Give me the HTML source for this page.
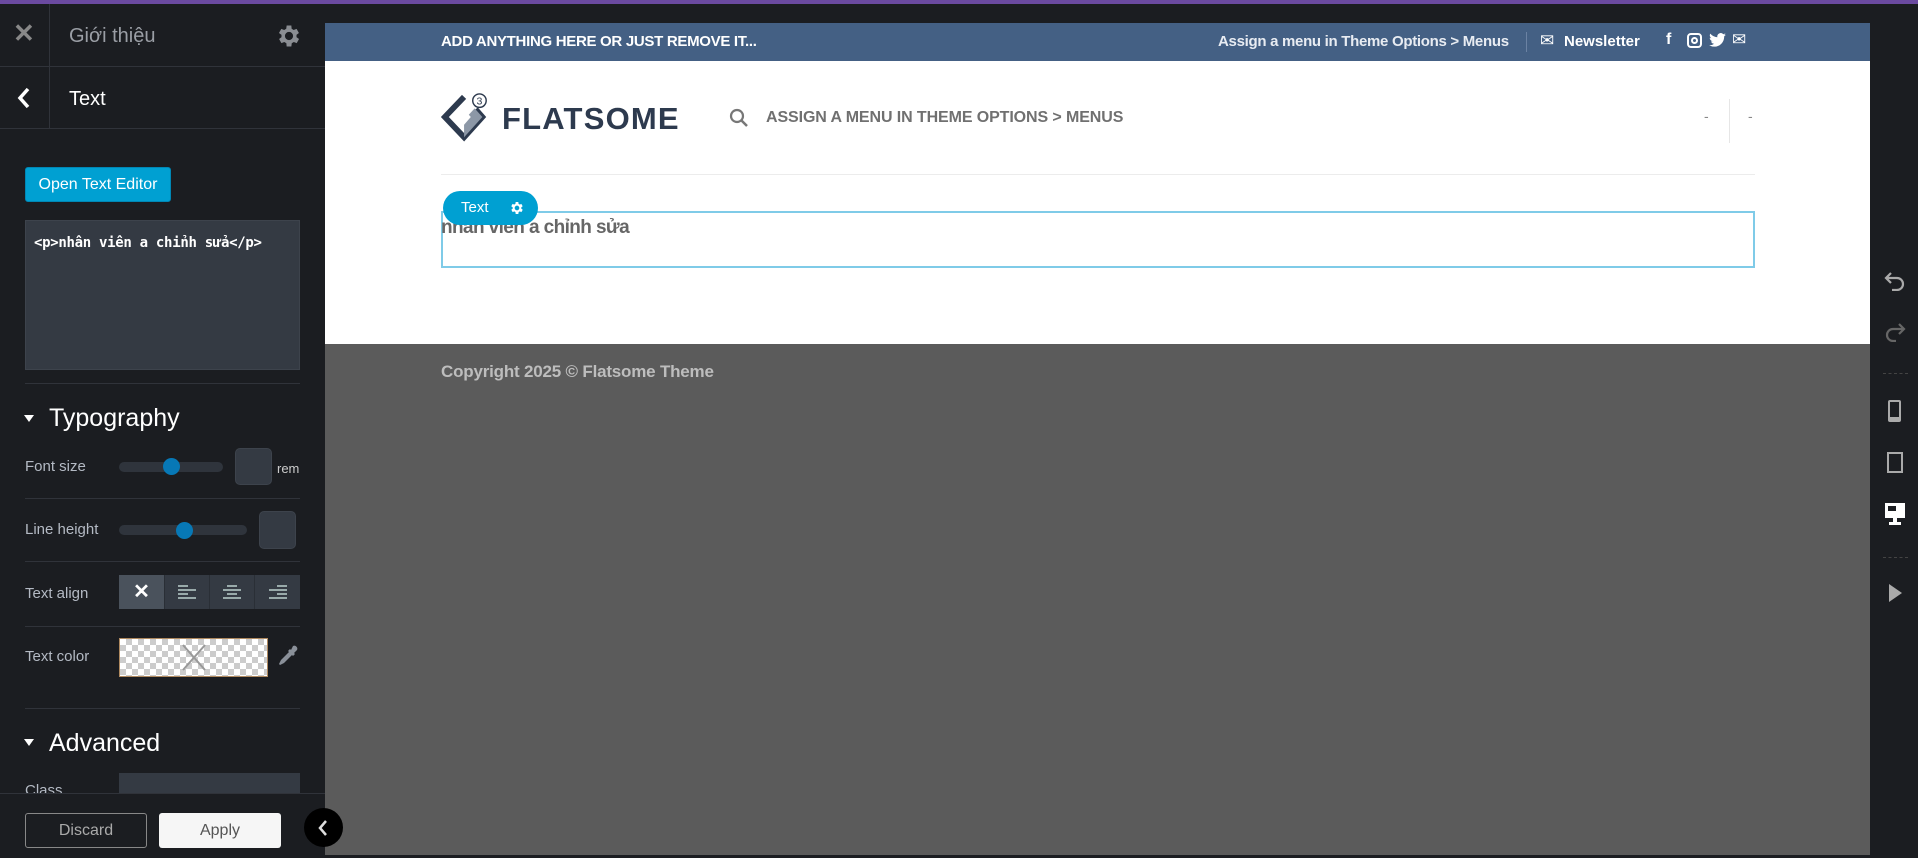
<!DOCTYPE html>
<html><head><meta charset="utf-8"><style>
*{box-sizing:border-box;margin:0;padding:0}
body{width:1918px;height:858px;overflow:hidden;background:#1b1d21;font-family:"Liberation Sans","Noto Sans CJK SC",sans-serif;position:relative}
.a{position:absolute}
.purple{left:0;top:0;width:1918px;height:4px;background:#6b4aa0}
.sb{left:0;top:4px;width:325px;height:854px;background:#1b1d21}
.hl{background:#30333a;height:1px}
.lbl{color:#b4bac4;font-size:15px}
.inp{background:#343a43;border:1px solid #3d434c;border-radius:4px}
.track{height:10px;background:#2f343c;border-radius:5px}
.knob{width:17px;height:17px;border-radius:50%;background:#0778b6}
</style></head><body>
<div class="a purple"></div>
<div class="a sb"></div>
<div class="a" style="left:49px;top:4px;width:1px;height:124px;background:#30333a"></div>
<div class="a hl" style="left:0;top:66px;width:325px"></div>
<div class="a hl" style="left:0;top:128px;width:325px"></div>
<div class="a" style="left:13px;top:20px;color:#888;font-size:26px;line-height:26px;font-weight:bold">✕</div>
<div class="a" style="left:69px;top:25px;color:#9a9ea5;font-size:20px">Giới thiệu</div>
<svg class="a" style="left:275px;top:22px" width="28" height="28" viewBox="0 0 24 24"><path fill="#8a8d92" d="M19.4 13a7.5 7.5 0 000-2l2.1-1.6-2-3.5-2.5 1a7 7 0 00-1.7-1L15 3h-4l-.4 2.9a7 7 0 00-1.7 1l-2.5-1-2 3.5L6.6 11a7.5 7.5 0 000 2l-2.1 1.6 2 3.5 2.5-1a7 7 0 001.7 1L11 21h4l.4-2.9a7 7 0 001.7-1l2.5 1 2-3.5zM13 15.5a3.5 3.5 0 110-7 3.5 3.5 0 010 7z" transform="translate(-1 0)"/></svg>
<svg class="a" style="left:17px;top:86px" width="14" height="24" viewBox="0 0 14 24"><path d="M11 3L3 12l8 9" stroke="#fff" stroke-width="3.5" fill="none"/></svg>
<div class="a" style="left:69px;top:88px;color:#fff;font-size:20px">Text</div>
<div class="a" style="left:25px;top:167px;width:146px;height:35px;background:#00a0d2;border:1px solid #0087b5;border-radius:3px;color:#fff;font-size:16px;line-height:33px;text-align:center">Open Text Editor</div>
<div class="a inp" style="left:25px;top:220px;width:275px;height:150px;border-radius:0;color:#fff;font-family:'DejaVu Sans Mono','Liberation Mono',monospace;font-size:14px;font-weight:bold;padding:14px 8px;letter-spacing:-0.3px">&lt;p&gt;nhân viên a chỉnh sửa&lt;/p&gt;</div>
<div class="a hl" style="left:25px;top:383px;width:275px"></div>
<div class="a" style="left:24px;top:415px;width:0;height:0;border-left:5px solid transparent;border-right:5px solid transparent;border-top:7px solid #fff"></div>
<div class="a" style="left:49px;top:404px;color:#fff;font-size:25px">Typography</div>
<div class="a lbl" style="left:25px;top:458px">Font size</div>
<div class="a track" style="left:119px;top:462px;width:104px"></div>
<div class="a knob" style="left:163px;top:458px"></div>
<div class="a inp" style="left:235px;top:448px;width:37px;height:37px;border-radius:5px"></div>
<div class="a" style="left:277px;top:461px;color:#ccc;font-size:13px">rem</div>
<div class="a hl" style="left:25px;top:498px;width:275px"></div>
<div class="a lbl" style="left:25px;top:521px">Line height</div>
<div class="a track" style="left:119px;top:525px;width:128px"></div>
<div class="a knob" style="left:176px;top:522px"></div>
<div class="a inp" style="left:259px;top:511px;width:37px;height:38px;border-radius:5px"></div>
<div class="a hl" style="left:25px;top:561px;width:275px"></div>
<div class="a lbl" style="left:25px;top:585px">Text align</div>
<div class="a" style="left:119px;top:575px;width:181px;height:34px;background:#343a43;display:flex">
 <div style="width:45px;height:34px;background:#4a525c;color:#fff;font-size:20px;font-weight:bold;text-align:center;line-height:34px">✕</div>
 <div style="width:45px;border-left:1px solid #2a2f36;display:flex;align-items:center;justify-content:center"><svg width="18" height="16"><g fill="#9aa"><rect x="0" y="1" width="10" height="2"/><rect x="0" y="5" width="18" height="2"/><rect x="0" y="9" width="10" height="2"/><rect x="0" y="13" width="18" height="2"/></g></svg></div>
 <div style="width:45px;border-left:1px solid #2a2f36;display:flex;align-items:center;justify-content:center"><svg width="18" height="16"><g fill="#9aa"><rect x="4" y="1" width="10" height="2"/><rect x="0" y="5" width="18" height="2"/><rect x="4" y="9" width="10" height="2"/><rect x="0" y="13" width="18" height="2"/></g></svg></div>
 <div style="width:46px;border-left:1px solid #2a2f36;display:flex;align-items:center;justify-content:center"><svg width="18" height="16"><g fill="#9aa"><rect x="8" y="1" width="10" height="2"/><rect x="0" y="5" width="18" height="2"/><rect x="8" y="9" width="10" height="2"/><rect x="0" y="13" width="18" height="2"/></g></svg></div>
</div>
<div class="a hl" style="left:25px;top:626px;width:275px"></div>
<div class="a lbl" style="left:25px;top:648px">Text color</div>
<div class="a" style="left:119px;top:638px;width:149px;height:39px;border:1px solid #b08a60;background-color:#fff;background-image:linear-gradient(45deg,#ccc 25%,transparent 25%,transparent 75%,#ccc 75%),linear-gradient(45deg,#ccc 25%,transparent 25%,transparent 75%,#ccc 75%);background-size:12px 12px;background-position:0 0,6px 6px"></div>
<svg class="a" style="left:181px;top:643px" width="26" height="29"><path d="M2 2L24 27M24 2L2 27" stroke="#999" stroke-width="2"/></svg>
<svg class="a" style="left:277px;top:645px" width="22" height="24" viewBox="0 0 22 24"><path d="M16 1a3 3 0 014 4l-3 3 1 1-2 2-1-1-8 8-4 2-1-1 2-4 8-8-1-1 2-2 1 1z" fill="#8a9099"/></svg>
<div class="a hl" style="left:25px;top:708px;width:275px"></div>
<div class="a" style="left:24px;top:739px;width:0;height:0;border-left:5px solid transparent;border-right:5px solid transparent;border-top:7px solid #fff"></div>
<div class="a" style="left:49px;top:729px;color:#fff;font-size:25px">Advanced</div>
<div class="a lbl" style="left:25px;top:782px">Class</div>
<div class="a" style="left:119px;top:773px;width:181px;height:30px;background:#343a43"></div>
<div class="a" style="left:0;top:793px;width:325px;height:65px;background:#1b1d21;border-top:1px solid #30333a"></div>
<div class="a" style="left:25px;top:813px;width:122px;height:35px;border:1px solid #888;border-radius:3px;color:#aaa;font-size:16px;line-height:33px;text-align:center">Discard</div>
<div class="a" style="left:159px;top:813px;width:122px;height:35px;background:#f6f6f6;border-radius:3px;color:#555;font-size:16px;line-height:35px;text-align:center">Apply</div>

<!-- preview -->
<div class="a" style="left:325px;top:23px;width:1545px;height:38px;background:#446084"></div>
<div class="a" style="left:441px;top:33px;color:#fff;font-size:15px;font-weight:bold;letter-spacing:-0.3px">ADD ANYTHING HERE OR JUST REMOVE IT...</div>
<div class="a" style="left:1218px;top:33px;color:#e8ecf2;font-size:15px;font-weight:bold;letter-spacing:-0.3px">Assign a menu in Theme Options &gt; Menus</div>
<div class="a" style="left:1526px;top:32px;width:1px;height:20px;background:#6b82a3"></div>
<div class="a" style="left:1540px;top:31px;color:#fff;font-size:17px">✉</div>
<div class="a" style="left:1564px;top:33px;color:#fff;font-size:15px;font-weight:bold">Newsletter</div>
<div class="a" style="left:1666px;top:31px;color:#fff;font-size:16px;font-weight:bold">f</div>
<div class="a" style="left:1687px;top:33px;width:15px;height:15px;border:2px solid #fff;border-radius:4px"></div>
<div class="a" style="left:1691px;top:37px;width:7px;height:7px;border:2px solid #fff;border-radius:50%"></div>
<svg class="a" style="left:1709px;top:33px" width="17" height="14" viewBox="0 0 24 20"><path fill="#fff" d="M24 2.4a10 10 0 01-2.8.8A5 5 0 0023.3.5a10 10 0 01-3.1 1.2A4.9 4.9 0 0011.8 6 14 14 0 011.7.9a4.9 4.9 0 001.5 6.6A5 5 0 01.9 6.9a4.9 4.9 0 004 4.9 5 5 0 01-2.2.1 4.9 4.9 0 004.6 3.4A9.9 9.9 0 010 17.3 14 14 0 007.5 19.5c9 0 14-7.5 14-14v-.6A10 10 0 0024 2.4z"/></svg>
<div class="a" style="left:1732px;top:30px;color:#fff;font-size:17px">✉</div>

<div class="a" style="left:325px;top:61px;width:1545px;height:283px;background:#fff"></div>
<svg class="a" style="left:441px;top:90px" width="50" height="55" viewBox="0 0 52 55"><path d="M24 6L4 27l20 21 19-21-7-8" stroke="#2d3a4e" stroke-width="6" fill="none" stroke-linejoin="miter"/><path d="M24 48l19-21-8-9-11 12z" fill="#8c97a6"/><path d="M17 27l7-8 7 8-7 8z" fill="#fff"/><circle cx="40" cy="10" r="7" fill="#fff" stroke="#2d3a4e" stroke-width="1.5"/><text x="40" y="14" font-size="11" text-anchor="middle" fill="#2d3a4e" font-family="Liberation Sans">3</text></svg>
<div class="a" style="left:502px;top:101px;color:#2d3a4e;font-size:31px;font-weight:bold;letter-spacing:1.2px">FLATSOME</div>
<svg class="a" style="left:729px;top:108px" width="20" height="20"><circle cx="8" cy="8" r="6" stroke="#777" stroke-width="2.2" fill="none"/><path d="M12.5 12.5L18 18" stroke="#777" stroke-width="2.5"/></svg>
<div class="a" style="left:766px;top:109px;color:#707070;font-size:16px;font-weight:bold;letter-spacing:-0.1px">ASSIGN A MENU IN THEME OPTIONS &gt; MENUS</div>
<div class="a" style="left:1704px;top:108px;color:#888;font-size:14px">-</div>
<div class="a" style="left:1729px;top:99px;width:1px;height:44px;background:#e6e6e6"></div>
<div class="a" style="left:1748px;top:108px;color:#888;font-size:14px">-</div>
<div class="a" style="left:441px;top:174px;width:1314px;height:1px;background:#ececec"></div>
<div class="a" style="left:441px;top:211px;width:1314px;height:57px;border:2px solid #7fcbe8"></div>
<div class="a" style="left:441px;top:217px;color:#666;font-size:19px;font-weight:bold;letter-spacing:-0.6px">nhân viên a chỉnh sửa</div>
<div class="a" style="left:443px;top:191px;width:95px;height:34px;border-radius:17px;background:#00a0d2"></div>
<div class="a" style="left:461px;top:199px;color:#fff;font-size:15px">Text</div>
<svg class="a" style="left:509px;top:200px" width="16" height="16" viewBox="0 0 24 24"><path fill="#fff" d="M19.4 13a7.5 7.5 0 000-2l2.1-1.6-2-3.5-2.5 1a7 7 0 00-1.7-1L15 3h-4l-.4 2.9a7 7 0 00-1.7 1l-2.5-1-2 3.5L6.6 11a7.5 7.5 0 000 2l-2.1 1.6 2 3.5 2.5-1a7 7 0 001.7 1L11 21h4l.4-2.9a7 7 0 001.7-1l2.5 1 2-3.5zM13 15.5a3.5 3.5 0 110-7 3.5 3.5 0 010 7z" transform="translate(-1 0)"/></svg>
<div class="a" style="left:325px;top:344px;width:1545px;height:511px;background:#5b5b5b"></div>
<div class="a" style="left:441px;top:362px;color:#bdbdbd;font-size:17px;font-weight:bold;letter-spacing:-0.2px">Copyright 2025 © Flatsome Theme</div>

<div class="a" style="left:304px;top:808px;width:39px;height:39px;border-radius:50%;background:#000"></div>
<svg class="a" style="left:317px;top:818px" width="12" height="20"><path d="M9 3L3 10l6 7" stroke="#ddd" stroke-width="2.5" fill="none"/></svg>

<!-- right toolbar -->
<svg class="a" style="left:1884px;top:271px" width="22" height="20"><path d="M7 2L2 7l5 5M2 7h11a6 6 0 010 12H8" stroke="#aaa" stroke-width="2.2" fill="none"/></svg>
<svg class="a" style="left:1884px;top:322px" width="22" height="20"><path d="M15 2l5 5-5 5M20 7H9a6 6 0 000 12h3" stroke="#666" stroke-width="2.2" fill="none"/></svg>
<div class="a" style="left:1883px;top:373px;width:25px;border-top:1px dashed #444"></div>
<div class="a" style="left:1888px;top:400px;width:13px;height:22px;border:2px solid #aaa;border-radius:2px;border-bottom-width:5px"></div>
<div class="a" style="left:1887px;top:452px;width:16px;height:21px;border:2px solid #aaa"></div>
<svg class="a" style="left:1884px;top:502px" width="22" height="24"><rect x="1" y="1" width="20" height="15" fill="#fff"/><rect x="4" y="4" width="8" height="5" fill="#1b1d21"/><rect x="9" y="16" width="4" height="4" fill="#fff"/><rect x="5" y="20" width="12" height="3" fill="#fff"/></svg>
<div class="a" style="left:1883px;top:557px;width:25px;border-top:1px dashed #444"></div>
<div class="a" style="left:1889px;top:584px;width:0;height:0;border-top:9px solid transparent;border-bottom:9px solid transparent;border-left:13px solid #aaa"></div>
</body></html>
